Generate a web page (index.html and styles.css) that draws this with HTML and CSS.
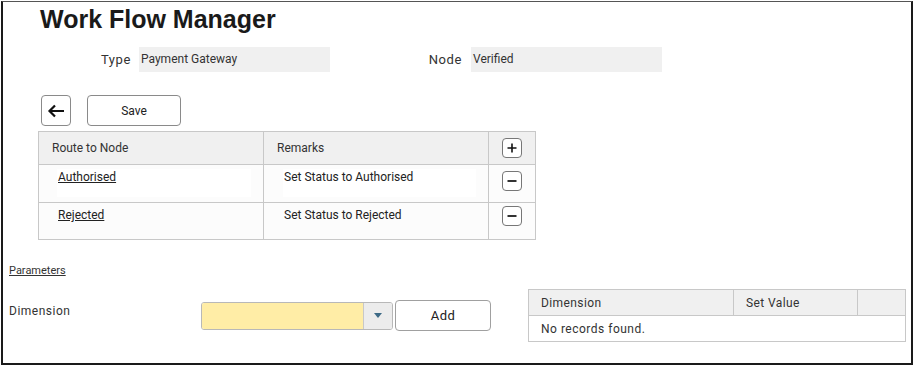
FILE: index.html
```html
<!DOCTYPE html>
<html>
<head>
<meta charset="utf-8">
<title>Work Flow Manager</title>
<link rel="stylesheet" href="styles.css">
</head>
<body>
<div class="frame">
  <h1 class="title">Work Flow Manager</h1>

  <div class="fields">
    <label class="lbl lbl-type">Type</label>
    <div class="ro-box">Payment Gateway</div>
    <label class="lbl lbl-node">Node</label>
    <div class="ro-box">Verified</div>
  </div>

  <div class="toolbar">
    <button class="btn btn-back" aria-label="Back">
      <svg width="18" height="14" viewBox="0 0 18 14"><path d="M17 7H2.5M8 1.5L2.5 7 8 12.5" fill="none" stroke="#111" stroke-width="2.2"/></svg>
    </button>
    <button class="btn btn-save">Save</button>
  </div>

  <table class="grid routes">
    <colgroup><col class="c1"><col class="c2"><col class="c3"></colgroup>
    <thead>
      <tr><th>Route to Node</th><th>Remarks</th><th class="ic"><div class="icwrap"><span class="sq-btn"><svg width="12" height="12" viewBox="0 0 12 12"><path d="M6 1.5v9M1.5 6h9" stroke="#111" stroke-width="1.6"/></svg></span></div></th></tr>
    </thead>
    <tbody>
      <tr class="r1"><td><div class="cellbox"><a href="#">Authorised</a></div></td><td><div class="cellbox">Set Status to Authorised</div></td><td class="ic"><div class="icwrap"><span class="sq-btn"><svg width="12" height="12" viewBox="0 0 12 12"><path d="M1.5 6h9" stroke="#333" stroke-width="2"/></svg></span></div></td></tr>
      <tr class="r2"><td><div class="cellbox plain"><a href="#">Rejected</a></div></td><td><div class="cellbox plain">Set Status to Rejected</div></td><td class="ic"><div class="icwrap"><span class="sq-btn"><svg width="12" height="12" viewBox="0 0 12 12"><path d="M1.5 6h9" stroke="#333" stroke-width="2"/></svg></span></div></td></tr>
    </tbody>
  </table>

  <div class="params">
    <a href="#" class="params-link">Parameters</a>
    <div class="param-row">
      <div class="dim-form">
        <label class="dim-lbl">Dimension</label>
        <div class="select">
          <span class="select-val"></span>
          <span class="select-arrow"><svg width="8" height="5" viewBox="0 0 8 5"><path d="M0 0h8L4 5z" fill="#3d6a86"/></svg></span>
        </div>
        <button class="btn btn-add">Add</button>
      </div>
      <table class="grid dims">
        <colgroup><col class="d1"><col class="d2"><col class="d3"></colgroup>
        <thead><tr><th>Dimension</th><th>Set Value</th><th></th></tr></thead>
        <tbody><tr><td colspan="3">No records found.</td></tr></tbody>
      </table>
    </div>
  </div>
</div>
</body>
</html>
```

FILE: styles.css
```css
html, body { margin: 0; padding: 0; background: #fff; }
body { font-family: Roboto, "Liberation Sans", sans-serif; font-size: 12px; color: #222; }

.frame {
  margin: 1px 0 0 1px;
  width: 908px;
  height: 361px;
  border: 2px solid #1a1a1a;
  border-top: 1px solid #555;
  box-sizing: content-box;
}

.title {
  margin: 3px 0 0 37px;
  font-family: "Liberation Sans", Arial, sans-serif;
  font-weight: bold;
  font-size: 25px;
  line-height: 29px;
  color: #1a1a1a;
}

.fields {
  display: flex;
  align-items: center;
  margin-top: 13px;
  height: 25px;
}
.lbl { text-align: right; color: #333; font-size: 13px; letter-spacing: 0.6px; }
.lbl-type { width: 128px; margin-right: 8px; }
.lbl-node { width: 132px; margin-right: 9px; }
.ro-box {
  width: 189px;
  height: 25px;
  line-height: 25px;
  padding-left: 2px;
  background: #f0f0f0;
  color: #333;
  font-size: 12px;
}

.toolbar {
  display: flex;
  gap: 16px;
  margin: 23px 0 0 38px;
}
.btn {
  background: #fff;
  border: 1px solid #8a8a8a;
  border-radius: 4px;
  font-family: Roboto, "Liberation Sans", sans-serif;
  color: #222;
  padding: 0;
  box-sizing: border-box;
}
.btn-back { width: 30px; height: 31px; display: flex; align-items: center; justify-content: center; }
.btn-save { width: 94px; height: 31px; font-size: 12px; }

.grid { border-collapse: collapse; table-layout: fixed; }
.grid th, .grid td { border: 1px solid #c8c8c8; padding: 0; text-align: left; font-weight: normal; }
.grid thead th { background: #f0f0f0; color: #333; }

.routes { margin: 5px 0 0 35px; width: 497px; }
.routes col.c1 { width: 225px; }
.routes col.c2 { width: 225px; }
.routes col.c3 { width: 47px; }
.routes thead th { height: 32px; padding-left: 13px; font-size: 12px; }
.routes tbody td { vertical-align: top; background: #fcfcfc; }
.routes tr.r1 td { height: 37px; }
.routes tr.r2 td { height: 36px; }
.routes .ic { padding: 0; vertical-align: middle; }
.routes tbody .ic { vertical-align: top; }
.icwrap { display: flex; justify-content: center; align-items: flex-start; height: 30px; }
.routes tbody .icwrap { padding-top: 6px; box-sizing: border-box; height: 30px; }
.routes tr.r2 .icwrap { padding-top: 3px; }
.routes thead .icwrap { align-items: center; height: 30px; }
.cellbox {
  margin: 4px 12px 0 18px;
  height: 28px;
  background: #fff;
  padding-left: 1px;
  line-height: 16px;
  color: #222;
}
.cellbox.plain { background: transparent; margin-top: 4px; }
.routes td:nth-child(2) .cellbox { margin-left: 19px; margin-right: 12px; }
.cellbox a { color: #222; text-decoration: underline; }
.sq-btn {
  display: flex;
  align-items: center;
  justify-content: center;
  width: 20px;
  height: 20px;
  border: 1px solid #777;
  border-radius: 4px;
  background: #fff;
  box-sizing: border-box;
}

.params { margin: 23px 0 0 6px; }
.params-link { color: #333; font-size: 11px; text-decoration: underline; display: inline-block; height: 14px; line-height: 14px; }
.param-row { display: flex; align-items: flex-start; margin-top: 11px; }
.dim-form { display: flex; align-items: center; margin-top: 11px; }
.dim-lbl { width: 192px; color: #333; font-size: 12px; letter-spacing: 0.5px; margin-top: -10px; }
.select {
  display: flex;
  width: 192px;
  height: 28px;
  border: 1px solid #b8b8b8;
  border-radius: 3px;
  box-sizing: border-box;
  overflow: hidden;
}
.select-val { flex: 1; background: #ffeda6; }
.select-arrow {
  width: 28px;
  background: #ececec;
  border-left: 1px solid #c8c8c8;
  display: flex;
  align-items: center;
  justify-content: center;
}
.btn-add { width: 96px; height: 31px; margin-left: 2px; font-size: 13px; letter-spacing: 0.5px; border-color: #a0a0a0; }

.dims { margin-left: auto; margin-right: 5px; width: 377px; }
.dims col.d1 { width: 205px; }
.dims col.d2 { width: 124px; }
.dims col.d3 { width: 48px; }
.dims th { height: 25px; padding-left: 12px; font-size: 12px; letter-spacing: 0.4px; }
.dims td { height: 25px; padding-left: 12px; font-size: 12px; letter-spacing: 0.5px; color: #333; }
```
